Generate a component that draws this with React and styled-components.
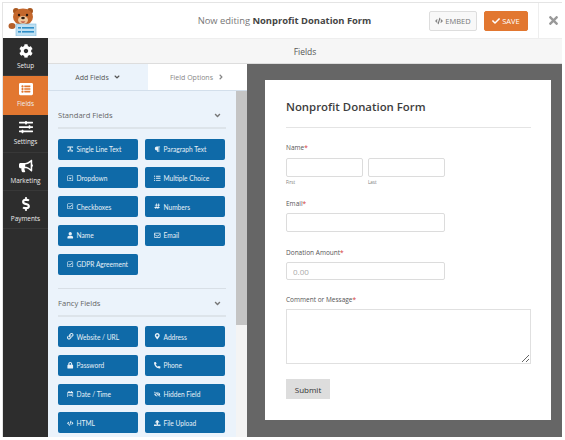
import React from 'react';
import styled, { createGlobalStyle } from 'styled-components';
import {
  FaCog, FaListAlt, FaSlidersH, FaBullhorn, FaDollarSign, FaTextWidth, FaParagraph,
  FaRegCaretSquareDown, FaListUl, FaRegCheckSquare, FaHashtag, FaUser, FaRegEnvelope,
  FaLink, FaMapMarkerAlt, FaLock, FaPhoneAlt, FaRegCalendarAlt, FaEyeSlash, FaCode,
  FaUpload, FaCheck, FaTimes, FaAngleDown, FaAngleRight,
} from 'react-icons/fa';

const GlobalStyle = createGlobalStyle`
  html, body {
    margin: 0;
    background: #fff;
    font-family: "Open Sans", "Liberation Sans", sans-serif;
  }
  * { box-sizing: border-box; }
`;

const Frame = styled.div`
  width: 560px;
  height: 435px;
  margin: 2px 0 0 2px;
  border-top: 1px solid #e4e4e4;
  border-left: 1px solid #e4e4e4;
  display: flex;
  flex-direction: column;
  overflow: hidden;
`;

const TopBar = styled.header`
  height: 35px;
  flex: none;
  display: flex;
  align-items: center;
  background: #fff;
`;

const LogoBox = styled.div`
  width: 45px;
  display: flex;
  justify-content: center;
  padding-right: 6px;
`;

const EditingTitle = styled.div`
  flex: 1;
  text-align: center;
  font-size: 9.4px;
  color: #777;
  padding-left: 92px;
  b { color: #444; font-weight: 700; }
`;

const TopButton = styled.button`
  height: 20px;
  padding: 0;
  width: ${(p) => p.$width}px;
  margin-right: ${(p) => p.$gap}px;
  border-radius: 2px;
  border: 1px solid ${(p) => (p.$primary ? '#e27730' : '#ddd')};
  background: ${(p) => (p.$primary ? '#e27730' : '#f8f8f8')};
  color: ${(p) => (p.$primary ? '#fff' : '#777')};
  font: 400 7.5px "Open Sans", sans-serif;
  display: flex;
  align-items: center;
  justify-content: center;
  gap: 2px;
  svg { font-size: 8px; }
`;

const CloseBox = styled.div`
  width: 24px;
  height: 35px;
  padding-left: 6px;
  border-left: 1px solid #eee;
  color: #999;
  font-size: 13px;
  display: flex;
  align-items: center;
  justify-content: center;
`;

const Body = styled.div`
  flex: 1;
  display: flex;
  min-height: 0;
`;

const Sidebar = styled.nav`
  width: 45px;
  flex: none;
  background: #2d2d2d;
`;

const SideItem = styled.div`
  height: 38.3px;
  display: flex;
  flex-direction: column;
  align-items: center;
  justify-content: center;
  gap: 3px;
  color: #eee;
  background: ${(p) => (p.$active ? '#e27730' : 'transparent')};
  border-bottom: 1px solid ${(p) => (p.$active ? '#e27730' : '#383838')};
  font-size: 6.4px;
  svg { font-size: 14px; color: #fff; }
`;

const Main = styled.div`
  flex: 1;
  display: flex;
  flex-direction: column;
  min-width: 0;
`;

const FieldsBar = styled.div`
  height: 26px;
  flex: none;
  background: #f6f6f6;
  border-top: 1px solid #eee;
  border-bottom: 1px solid #ddd;
  display: flex;
  align-items: center;
  justify-content: center;
  font-size: 8.5px;
  color: #555;
`;

const Split = styled.div`
  flex: 1;
  display: flex;
  min-height: 0;
`;

const LeftPanel = styled.div`
  width: 199px;
  flex: none;
  display: flex;
  flex-direction: column;
  overflow: hidden;
`;

const Tabs = styled.div`
  height: 27px;
  flex: none;
  display: flex;
  border-bottom: 1px solid #d3dfeb;
`;

const Tab = styled.div`
  width: ${(p) => p.$width}px;
  display: flex;
  align-items: center;
  justify-content: center;
  gap: 4px;
  font-size: 7px;
  color: ${(p) => (p.$active ? '#555' : '#888')};
  background: ${(p) => (p.$active ? '#ebf3fb' : '#fff')};
  svg { font-size: 8px; }
`;

const PanelBody = styled.div`
  flex: 1;
  display: flex;
  min-height: 0;
`;

const FieldList = styled.div`
  width: 188px;
  flex: none;
  background: #ebf3fb;
  padding: 0 10px;
  overflow: hidden;
`;

const Scrollbar = styled.div`
  width: 11px;
  flex: none;
  background: #f4f4f4;
`;

const ScrollThumb = styled.div`
  height: 234px;
  background: #c4c4c4;
`;

const GroupHead = styled.div`
  height: ${(p) => p.$height}px;
  padding: 0 4px 7px 0;
  display: flex;
  align-items: flex-end;
  justify-content: space-between;
  font-size: 7.6px;
  color: #666;
  border-bottom: 2px solid #dde4ea;
  svg { font-size: 9px; color: #777; }
`;

const ButtonGrid = styled.div`
  display: grid;
  grid-template-columns: 80px 80px;
  column-gap: 7px;
  row-gap: 7.75px;
  margin-top: 9.5px;
  padding-bottom: 13px;
  border-bottom: ${(p) => (p.$divided ? '1px solid #d8dfe6' : 'none')};
`;

const FieldButton = styled.div`
  height: 21px;
  border-radius: 2px;
  background: #0f6aa8;
  color: #e8f1f7;
  font-family: Lato, "Open Sans", sans-serif;
  font-size: 6.6px;
  font-weight: 400;
  display: flex;
  align-items: center;
  gap: 3px;
  padding-left: 9px;
  white-space: nowrap;
  svg { font-size: 6.5px; flex: none; }
`;

const Preview = styled.div`
  flex: 1;
  background: #666;
  padding: 16px 11px 17px 18px;
  min-width: 0;
`;

const Card = styled.form`
  height: 340px;
  background: #fff;
  padding: 17px 20px 0 21px;
`;

const FormTitle = styled.h1`
  margin: 0;
  height: 31px;
  font-size: 11.4px;
  line-height: 19px;
  font-weight: 600;
  color: #3d3d3d;
  border-bottom: 1px solid #e4e4e4;
`;

const FieldLabel = styled.label`
  display: block;
  margin-top: ${(p) => p.$top}px;
  height: 14px;
  line-height: 10px;
  font-size: 6.5px;
  color: #555;
  span { color: #d63638; }
`;

const InputRow = styled.div`
  display: flex;
  gap: 5px;
  margin-top: ${(p) => p.$top || 0}px;
`;

const SubColumn = styled.div`
  width: 77px;
`;

const TextInput = styled.input`
  display: block;
  width: ${(p) => p.$width || '100%'};
  height: ${(p) => p.$height || 19}px;
  padding: 0 6px;
  border: 1px solid #dcdcdc;
  border-radius: 2px;
  background: #fff;
  font: 400 8px "Open Sans", sans-serif;
  &::placeholder { color: #aaa; }
`;

const SubLabel = styled.div`
  font-size: 4.5px;
  line-height: 8px;
  color: #777;
  margin-top: 1px;
`;

const MessageBox = styled.textarea`
  display: block;
  width: 100%;
  height: 55px;
  margin: 0;
  border: 1px solid #e0e0e0;
  background: #fff;
  resize: vertical;
`;

const SubmitButton = styled.button`
  display: block;
  width: 44px;
  height: 20px;
  margin-top: 15px;
  padding: 0;
  border: 1px solid #ddd;
  background: #ddd;
  color: #333;
  font: 400 8px "Open Sans", sans-serif;
`;

const standardFields = [
  [FaTextWidth, 'Single Line Text'],
  [FaParagraph, 'Paragraph Text'],
  [FaRegCaretSquareDown, 'Dropdown'],
  [FaListUl, 'Multiple Choice'],
  [FaRegCheckSquare, 'Checkboxes'],
  [FaHashtag, 'Numbers'],
  [FaUser, 'Name'],
  [FaRegEnvelope, 'Email'],
  [FaRegCheckSquare, 'GDPR Agreement'],
];

const fancyFields = [
  [FaLink, 'Website / URL'],
  [FaMapMarkerAlt, 'Address'],
  [FaLock, 'Password'],
  [FaPhoneAlt, 'Phone'],
  [FaRegCalendarAlt, 'Date / Time'],
  [FaEyeSlash, 'Hidden Field'],
  [FaCode, 'HTML'],
  [FaUpload, 'File Upload'],
];

const sideItems = [
  [FaCog, 'Setup'],
  [FaListAlt, 'Fields', true],
  [FaSlidersH, 'Settings'],
  [FaBullhorn, 'Marketing'],
  [FaDollarSign, 'Payments'],
];

const BearLogo = () => (
  <svg width="30" height="30" viewBox="0 0 30 30">
    <circle cx="8" cy="5" r="3" fill="#a8571f" />
    <circle cx="22" cy="5" r="3" fill="#a8571f" />
    <ellipse cx="15" cy="11" rx="10" ry="8.5" fill="#c4672c" />
    <ellipse cx="15" cy="14" rx="5" ry="4" fill="#f0c79c" />
    <circle cx="11" cy="9" r="1.2" fill="#2b1a10" />
    <circle cx="19" cy="9" r="1.2" fill="#2b1a10" />
    <ellipse cx="15" cy="12" rx="1.8" ry="1.2" fill="#2b1a10" />
    <path d="M12.5 15.5 Q15 18 17.500 15.5 Z" fill="#b23a2a" />
    <ellipse cx="4" cy="20" rx="3.500" ry="3" fill="#b5602a" />
    <rect x="8" y="18" width="20" height="12" fill="#bfe0f2" stroke="#7db8dc" strokeWidth="0.6" />
    <rect x="10" y="21" width="3" height="1.600" fill="#2f8fc9" />
    <rect x="14" y="21" width="12" height="1.600" fill="#2f8fc9" />
    <rect x="10" y="25" width="3" height="1.600" fill="#2f8fc9" />
    <rect x="14" y="25" width="12" height="1.600" fill="#2f8fc9" />
  </svg>
);

const FieldButtons = ({ items, divided }) => (
  <ButtonGrid $divided={divided}>
    {items.map(([Icon, text]) => (
      <FieldButton key={text}>
        <Icon />
        {text}
      </FieldButton>
    ))}
  </ButtonGrid>
);

export default function App() {
  return (
    <>
      <GlobalStyle />
      <Frame>
        <TopBar>
          <LogoBox>
            <BearLogo />
          </LogoBox>
          <EditingTitle>
            Now editing <b>Nonprofit Donation Form</b>
          </EditingTitle>
          <TopButton type="button" $width={48} $gap={7}>
            <FaCode /> EMBED
          </TopButton>
          <TopButton type="button" $width={44} $gap={10} $primary>
            <FaCheck /> SAVE
          </TopButton>
          <CloseBox>
            <FaTimes />
          </CloseBox>
        </TopBar>
        <Body>
          <Sidebar>
            {sideItems.map(([Icon, text, active]) => (
              <SideItem key={text} $active={active}>
                <Icon />
                {text}
              </SideItem>
            ))}
          </Sidebar>
          <Main>
            <FieldsBar>Fields</FieldsBar>
            <Split>
              <LeftPanel>
                <Tabs>
                  <Tab $width={100} $active>
                    Add Fields <FaAngleDown />
                  </Tab>
                  <Tab $width={99}>
                    Field Options <FaAngleRight />
                  </Tab>
                </Tabs>
                <PanelBody>
                  <FieldList>
                    <GroupHead $height={38}>
                      Standard Fields <FaAngleDown />
                    </GroupHead>
                    <FieldButtons items={standardFields} divided />
                    <GroupHead $height={28}>
                      Fancy Fields <FaAngleDown />
                    </GroupHead>
                    <FieldButtons items={fancyFields} />
                  </FieldList>
                  <Scrollbar>
                    <ScrollThumb />
                  </Scrollbar>
                </PanelBody>
              </LeftPanel>
              <Preview>
                <Card>
                  <FormTitle>Nonprofit Donation Form</FormTitle>
                  <FieldLabel $top={15}>
                    Name<span>*</span>
                  </FieldLabel>
                  <InputRow $top={1}>
                    <SubColumn>
                      <TextInput />
                      <SubLabel>First</SubLabel>
                    </SubColumn>
                    <SubColumn>
                      <TextInput />
                      <SubLabel>Last</SubLabel>
                    </SubColumn>
                  </InputRow>
                  <FieldLabel $top={13}>
                    Email<span>*</span>
                  </FieldLabel>
                  <TextInput $width="159px" />
                  <FieldLabel $top={16}>
                    Donation Amount<span>*</span>
                  </FieldLabel>
                  <TextInput $width="159px" $height={18} placeholder="0.00" />
                  <FieldLabel $top={15}>
                    Comment or Message<span>*</span>
                  </FieldLabel>
                  <MessageBox />
                  <SubmitButton type="button">Submit</SubmitButton>
                </Card>
              </Preview>
            </Split>
          </Main>
        </Body>
      </Frame>
    </>
  );
}
